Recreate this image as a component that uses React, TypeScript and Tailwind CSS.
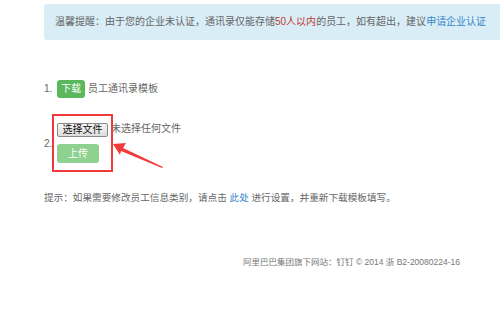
// App.tsx

export default function App() {
  return (
    <div
      className="relative w-[500px] h-[333px] overflow-hidden bg-white text-[#666] text-[10px] leading-none"
      style={{ fontFamily: '"Liberation Sans", "Noto Sans CJK SC", sans-serif' }}
    >
      {/* notice */}
      <div className="mt-[4px] ml-[44px] w-[480px] h-[36px] rounded-[3px] bg-[#d9edf7] pl-[11px] flex items-center whitespace-nowrap">
        <span>温馨提醒：由于您的企业未认证，通讯录仅能存储</span>
        <span className="text-[#c0392b]">50人以内</span>
        <span>的员工，如有超出，建议</span>
        <span className="text-[#3a87c8]">申请企业认证</span>
      </div>

      {/* steps */}
      <div className="mt-[40px] pl-[44px]">
        <div className="flex items-center h-[18px]">
          <span className="w-[13px]">1.</span>
          <button className="h-[18px] px-[4px] rounded-[3px] bg-[#5cb85c] text-white text-[10px]">下载</button>
          <span className="ml-[3px]">员工通讯录模板</span>
        </div>

        <div className="flex items-center mt-[25px]">
          <span className="w-[13px] mt-[2px]">2.</span>
          <div className="flex flex-col">
            <div className="flex items-center">
              <button className="h-[14px] w-[51px] border border-[#8a8a8a] rounded-[2px] bg-gradient-to-b from-[#f6f6f6] to-[#dddddd] text-[#111] text-[10px]">
                选择文件
              </button>
              <span className="ml-[3px] mt-[-2px]">未选择任何文件</span>
            </div>
            <button className="mt-[7px] h-[19px] w-[42px] rounded-[3px] bg-[#8fd18f] text-white text-[10px]">上传</button>
          </div>
        </div>
      </div>

      {/* hint */}
      <div className="mt-[30px] pl-[44px] whitespace-nowrap text-[9.65px]">
        提示：如果需要修改员工信息类别，请点击 <span className="text-[#3a87c8]">此处</span> 进行设置，并重新下载模板填写。
      </div>

      {/* footer */}
      <div className="mt-[55px] pr-[40px] text-right text-[#777] whitespace-nowrap text-[8.5px]">
        阿里巴巴集团旗下网站：钉钉 © 2014 浙 B2-20080224-16
      </div>

      {/* annotation */}
      <div className="absolute left-[52px] top-[114px] w-[61px] h-[58px] border-2 border-[#f23a3a]" />
      <svg className="absolute left-0 top-0" width="500" height="333" viewBox="0 0 500 333">
        <polygon points="113,144 126,143 123,148 163,167 162,168 121,151 120,155" fill="#f23a3a" />
      </svg>
    </div>
  )
}
